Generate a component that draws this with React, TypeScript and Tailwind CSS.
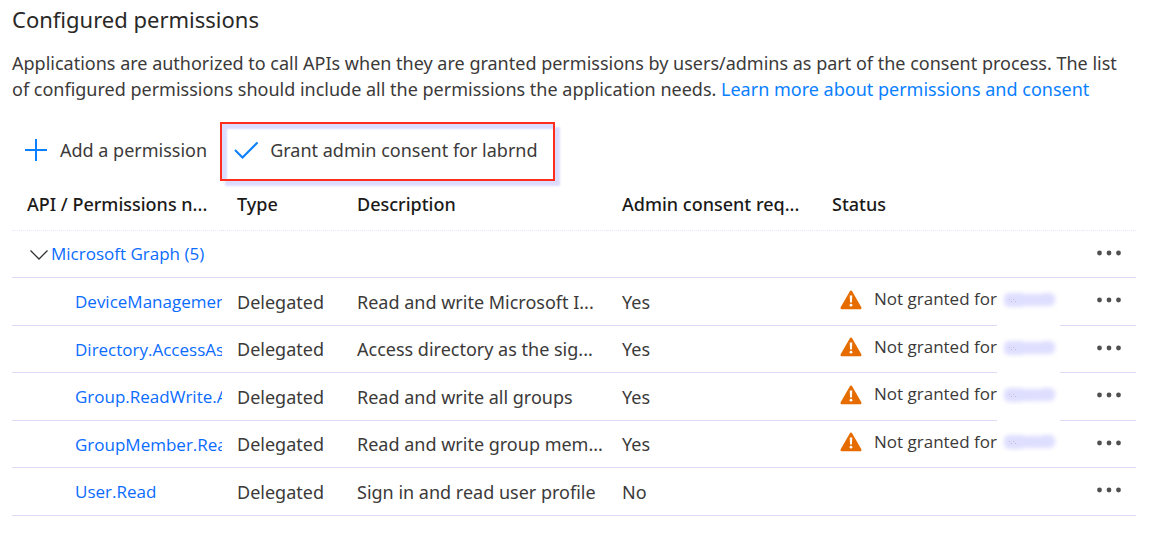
type Permission = {
  name: string;
  description: string;
  consent: string;
  pending: boolean;
  coversRule: boolean;
};

const permissions: Permission[] = [
  { name: "DeviceManagement", description: "Read and write Microsoft I...", consent: "Yes", pending: true, coversRule: true },
  { name: "Directory.AccessAsUser", description: "Access directory as the sig...", consent: "Yes", pending: true, coversRule: true },
  { name: "Group.ReadWrite.All", description: "Read and write all groups", consent: "Yes", pending: true, coversRule: true },
  { name: "GroupMember.Read", description: "Read and write group mem...", consent: "Yes", pending: true, coversRule: false },
  { name: "User.Read", description: "Sign in and read user profile", consent: "No", pending: false, coversRule: false },
];

function PlusIcon() {
  return (
    <svg className="h-6 w-6 shrink-0" viewBox="0 0 24 24" fill="none" stroke="#0a7fff" strokeWidth="2" aria-hidden="true">
      <path d="M1 12h22M12 1v22" />
    </svg>
  );
}

function CheckIcon() {
  return (
    <svg className="h-6 w-6 shrink-0" viewBox="0 0 24 24" fill="none" stroke="#0a7fff" strokeWidth="2" aria-hidden="true">
      <path d="M1 12l7.500 7.500L23.500 4.500" />
    </svg>
  );
}

function ChevronIcon() {
  return (
    <svg className="h-5 w-5 shrink-0" viewBox="0 0 20 20" fill="none" stroke="#323130" strokeWidth="1.300" aria-hidden="true">
      <path d="M1.500 5.500L10 14l8.500-8.500" />
    </svg>
  );
}

function WarningIcon() {
  return (
    <svg className="h-5 w-[22px] shrink-0" viewBox="0 0 22 20" aria-hidden="true">
      <path d="M11 1.800L20.200 18H1.800z" fill="#e66c00" stroke="#e66c00" strokeWidth="2.600" strokeLinejoin="round" />
      <path d="M9.700 5.500h2.600l-.4 7h-1.800z" fill="#fff" />
      <circle cx="11" cy="15.200" r="1.400" fill="#fff" />
    </svg>
  );
}

function MaskedTenant() {
  return (
    <svg className="h-5 w-[63px]" viewBox="0 0 63 20" aria-hidden="true">
      <defs>
        <filter id="soft" x="-20%" y="-50%" width="140%" height="200%">
          <feGaussianBlur stdDeviation="2.200" />
        </filter>
      </defs>
      <g filter="url(#soft)" fill="#dedeff">
        <rect x="7" y="3" width="22" height="14" rx="5" />
        <rect x="20" y="4" width="34" height="12" rx="3" />
        <rect x="42" y="3" width="16" height="13" rx="5" />
      </g>
      <path d="M12 9.500h1m3 0h1m-3 2h1m3 0h1" stroke="#c4c0cc" strokeWidth="1" />
    </svg>
  );
}

function MoreButton({ label }: { label: string }) {
  return (
    <button type="button" aria-label={label} className="flex h-6 w-6 items-center justify-center">
      <svg className="h-6 w-6" viewBox="0 0 24 24" fill="#505050" aria-hidden="true">
        <circle cx="2.500" cy="12" r="2.400" />
        <circle cx="12" cy="12" r="2.400" />
        <circle cx="21.500" cy="12" r="2.400" />
      </svg>
    </button>
  );
}

export default function App() {
  return (
    <main className="bg-white px-3 pt-[3px] pr-5 font-['Noto_Sans','Open_Sans',sans-serif] text-lg text-[#3b3a39]">
      <h1 className="text-[22px] leading-8 text-[#292827]">Configured permissions</h1>
      <p className="mt-[15px] leading-[26px]">
        Applications are authorized to call APIs when they are granted permissions by users/admins as part of the consent process. The list
        of configured permissions should include all the permissions the application needs.{" "}
        <a href="#learn" className="text-[#0a7fff]">Learn more about permissions and consent</a>
      </p>

      <div className="mt-5 flex items-start gap-[13px]">
        <button type="button" className="flex h-14 items-center gap-3 pl-3 whitespace-nowrap">
          <PlusIcon />
          Add a permission
        </button>
        <button
          type="button"
          className="flex h-[59px] w-[335px] items-center gap-3 border-2 border-[#ff2d1e] px-3 pb-1 whitespace-nowrap shadow-[5px_5px_2px_#dcdcff,inset_5px_5px_2px_#dcdcff]"
        >
          <CheckIcon />
          Grant admin consent for labrnd
        </button>
      </div>

      <table className="w-full table-fixed border-separate border-spacing-0 text-left whitespace-nowrap">
        <colgroup>
          <col className="w-[210px]" />
          <col className="w-[120px]" />
          <col className="w-[265px]" />
          <col className="w-[210px]" />
          <col />
          <col className="w-[54px]" />
        </colgroup>
        <thead>
          <tr className="h-[50px] text-[#1b1a19] *:border-b *:border-dotted *:border-[#eae6fa] *:pb-1 *:pl-[15px] *:font-medium">
            <th scope="col">API / Permissions n...</th>
            <th scope="col">Type</th>
            <th scope="col">Description</th>
            <th scope="col">Admin consent req...</th>
            <th scope="col">Status</th>
            <td />
          </tr>
        </thead>
        <tbody className="[&_td]:border-b [&_td]:border-[#dcdcfa] [&>tr:nth-child(even)]:h-12 [&>tr:nth-child(odd)]:h-[47px]">
          <tr>
            <td colSpan={5} className="pt-px pl-[17px]">
              <div className="flex items-center gap-[2px] font-['Open_Sans','Noto_Sans',sans-serif] text-[17px]">
                <button type="button" aria-label="Collapse Microsoft Graph">
                  <ChevronIcon />
                </button>
                <a href="#graph" className="text-[#0a6cff]">Microsoft Graph (5)</a>
              </div>
            </td>
            <td className="pb-[3px] pl-[15px]">
              <MoreButton label="More options for Microsoft Graph" />
            </td>
          </tr>
          {permissions.map((p) => (
            <tr key={p.name}>
              <td className="overflow-hidden pt-[2px] pl-[63px] font-['Open_Sans','Noto_Sans',sans-serif] text-[17px]">
                <a href={`#${p.name}`} className="text-[#0a6cff]">{p.name}</a>
              </td>
              <td className="pl-[15px]">Delegated</td>
              <td className="pl-[15px]">{p.description}</td>
              <td className="pl-[15px]">{p.consent}</td>
              <td className="relative pl-[23px]">
                {p.pending && (
                  <>
                    <div className={`absolute top-0 left-[180px] flex items-center bg-white pb-1 ${p.coversRule ? "-bottom-px" : "bottom-0"}`}>
                      <MaskedTenant />
                    </div>
                    <div className="relative flex items-center gap-3 pb-1 font-['Open_Sans','Noto_Sans',sans-serif] text-[17px]">
                      <WarningIcon />
                      Not granted for
                    </div>
                  </>
                )}
              </td>
              <td className="pb-[3px] pl-[15px]">
                <MoreButton label={`More options for ${p.name}`} />
              </td>
            </tr>
          ))}
        </tbody>
      </table>
    </main>
  );
}
